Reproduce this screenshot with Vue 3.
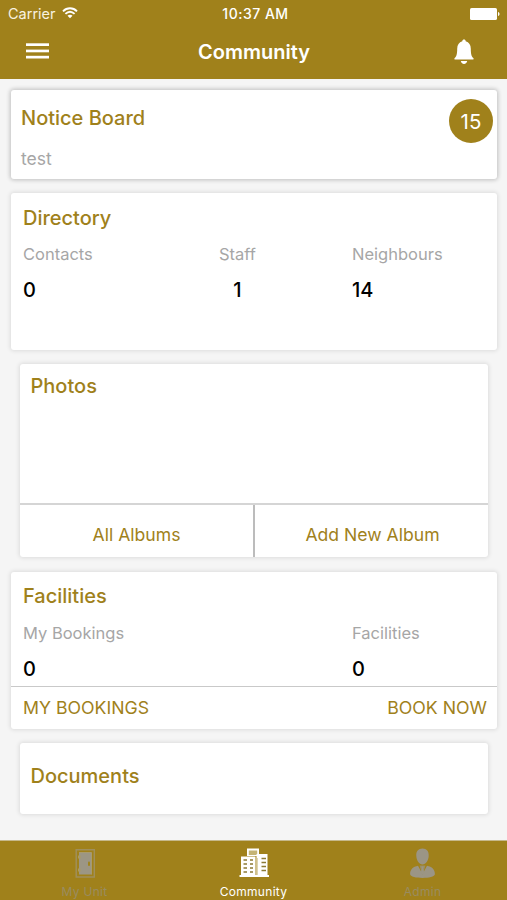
<script setup>
const directory = [
  { label: 'Contacts', value: '0' },
  { label: 'Staff', value: '1', centered: true },
  { label: 'Neighbours', value: '14' },
]
const facilities = [
  { label: 'My Bookings', value: '0' },
  { label: 'Facilities', value: '0', last: true },
]
</script>

<template>
  <div class="screen">
    <header class="header">
      <div class="status">
        <div class="carrier">
          <span>Carrier</span>
          <svg class="wifi" width="16" height="12" viewBox="0 0 16 12" fill="none" stroke="#fff" stroke-width="1.9">
            <path d="M1 4.3C5 .3 11 .3 15 4.3" />
            <path d="M3.4 6.9C6.2 4.2 9.8 4.2 12.6 6.9" />
            <path d="M5.5 8.7C7 7.4 9 7.4 10.5 8.7L8 11.3Z" fill="#fff" stroke="none" />
          </svg>
        </div>
        <span class="clock">10:37 AM</span>
        <svg class="battery" width="30" height="12" viewBox="0 0 30 12" fill="#fff">
          <rect width="27" height="12" rx="1.6" />
          <path d="M28 4C30 4.3 30 7.7 28 8Z" />
        </svg>
      </div>
      <div class="navbar">
        <svg class="menu" width="23" height="16" viewBox="0 0 23 16" fill="#fff">
          <rect y="0.3" width="23" height="2.7" />
          <rect y="6.6" width="23" height="2.7" />
          <rect y="12.8" width="23" height="2.7" />
        </svg>
        <h1>Community</h1>
        <svg class="bell" width="20" height="26" viewBox="0 0 20 26" fill="#fff">
          <path d="M8.300 2.300C8.300 1 9 .4 10 .4s1.700.6 1.700 1.900C15 3.200 16.800 6 16.800 9.700c0 5.500 .8 8 2.500 9.300.6.500.4 1.600-.5 1.600H1.200c-.9 0-1.100-1.100-.5-1.600C2.400 17.700 3.200 15.200 3.200 9.700 3.200 6 5 3.200 8.300 2.300Z" />
          <path d="M6.800 22h6.400c-.4 1.800-1.400 2.900-3.200 2.900S7.200 23.800 6.800 22Z" />
        </svg>
      </div>
    </header>

    <main class="content">
      <section class="card notice">
        <div>
          <h2>Notice Board</h2>
          <p class="label">test</p>
        </div>
        <span class="count">15</span>
      </section>

      <section class="card directory">
        <h2>Directory</h2>
        <div class="stats">
          <div v-for="item in directory" :key="item.label" class="stat" :class="{ centered: item.centered }">
            <span class="label">{{ item.label }}</span>
            <strong>{{ item.value }}</strong>
          </div>
        </div>
      </section>

      <section class="card inset photos">
        <h2>Photos</h2>
        <div class="actions">
          <button>All Albums</button>
          <button>Add New Album</button>
        </div>
      </section>

      <section class="card facilities">
        <h2>Facilities</h2>
        <div class="stats">
          <div v-for="item in facilities" :key="item.label" class="stat" :class="{ last: item.last }">
            <span class="label">{{ item.label }}</span>
            <strong>{{ item.value }}</strong>
          </div>
        </div>
        <div class="links">
          <button>MY BOOKINGS</button>
          <button>BOOK NOW</button>
        </div>
      </section>

      <section class="card inset documents">
        <h2>Documents</h2>
      </section>
    </main>

    <nav class="tabs">
      <div class="tab">
        <svg width="32" height="32" viewBox="0 0 32 32">
          <path d="M7.200 2.700H25.300V30H7.200Z" fill="none" stroke="#9f8f5c" stroke-width="1.400" />
          <path d="M10 5.500H22.500V27.500H10Z" fill="#9c9684" />
          <path d="M10 5.500H22.500V27.500" fill="none" stroke="#a99b6c" stroke-width="1" />
          <path d="M9 8.500h2.500v3H9ZM9 21.500h2.500v3H9Z" fill="#aa9a60" />
          <rect x="19" y="14.500" width="2" height="4.500" rx="1" fill="#a0831b" />
        </svg>
        <span>My Unit</span>
      </div>
      <div class="tab active">
        <svg width="32" height="32" viewBox="0 0 32 32">
          <path d="M9 1.500H21V9H9Z" fill="#fff" />
          <path d="M10.800 3.500H19.200V8H10.800Z" fill="#c5b475" />
          <path d="M3 9.500H17.500V28H3ZM18.500 7H29.500V28H18.500Z" fill="#fff" />
          <path d="M1.500 28H31V30H1.500Z" fill="#fff" />
          <path d="M5.500 13H9M12 13h3M5.500 17H9M12 17h3M5.500 21H9M12 21h3M5.500 25H9M12 25h3M23.500 11.500H28M23.500 15.500H28M23.500 19.500H28M23.500 23.500H28" stroke="#8c7a35" stroke-width="1.700" />
          <path d="M19.500 11v17" stroke="#ded5af" stroke-width="1" />
        </svg>
        <span>Community</span>
      </div>
      <div class="tab">
        <svg width="32" height="32" viewBox="0 0 32 32" fill="#9b9585">
          <path d="M15.500 1.500C19.700 1.500 22 4.300 21.700 9c-.3 4.800-2.900 8.500-6.200 8.500S9.600 13.800 9.300 9C9 4.300 11.300 1.500 15.500 1.500Z" />
          <path d="M11 18.800L15.500 27l4.500-8.200c5 1 7.900 3.700 7.900 8.300C27.900 29.800 21.500 31 15.500 31S3.100 29.800 3.100 27.100C3.100 22.500 6 19.800 11 18.800Z" />
          <path d="M12.500 18.500h6L15.500 28Z" fill="#9a8e65" />
          <path d="M14.300 19.500h2.400l-.5 2 1 4-1.700 2.300-1.700-2.300 1-4Z" />
        </svg>
        <span>Admin</span>
      </div>
    </nav>
  </div>
</template>

<style>
body {
  margin: 0;
}
</style>

<style scoped>
.screen {
  display: flex;
  flex-direction: column;
  width: 507px;
  height: 900px;
  overflow: hidden;
  background: #f5f5f5;
  color: #9f811b;
  font-family: Inter, "Liberation Sans", sans-serif;
}

h1,
h2,
p {
  margin: 0;
}

button {
  padding: 0;
  border: 0;
  background: none;
  color: inherit;
  font: inherit;
}

svg {
  display: block;
  flex: none;
}

.header {
  height: 79px;
  flex: none;
  background: #a0811b;
  color: #fff;
}

.status {
  display: grid;
  grid-template-columns: 1fr auto 1fr;
  align-items: center;
  height: 27px;
  padding: 0 7px 0 8px;
  font-size: 14.5px;
}

.carrier {
  display: flex;
  align-items: center;
  gap: 6px;
  color: #f8f2e0;
}

.wifi {
  margin-bottom: 1px;
}

.clock {
  font-weight: 500;
  font-size: 14px;
  letter-spacing: 0.5px;
  margin-left: 3px;
}

.battery {
  justify-self: end;
}

.navbar {
  display: grid;
  grid-template-columns: 1fr auto 1fr;
  align-items: center;
  height: 50px;
  padding: 0 33px 0 26px;
}

.navbar h1 {
  font-size: 20px;
  line-height: 24px;
  font-weight: 600;
  margin-left: 8px;
}

.menu {
  margin-bottom: 3px;
}

.bell {
  justify-self: end;
}

.content {
  display: flex;
  flex: 1;
  flex-direction: column;
  padding: 11px 10px 0 11px;
}

.card {
  box-sizing: border-box;
  flex: none;
  border-radius: 3px;
  background: #fff;
  box-shadow: 0 0 4px 1px rgba(0, 0, 0, 0.1);
}

.inset {
  margin-left: 9px;
  margin-right: 9px;
}

h2 {
  font-size: 20px;
  line-height: 24px;
  font-weight: 500;
}

.label {
  color: #a6a6a6;
  font-size: 16.5px;
  line-height: 20px;
}

.notice {
  display: flex;
  justify-content: space-between;
  height: 89px;
  padding: 9px 4px 0 10px;
  box-shadow: 0 0 4px 1px rgba(0, 0, 0, 0.22);
}

.notice h2 {
  margin-top: 7px;
}

.notice .label {
  margin-top: 19px;
  font-size: 17.5px;
}

.count {
  display: grid;
  place-items: center;
  width: 44px;
  height: 44px;
  border-radius: 50%;
  background: #a0811b;
  color: #fff;
  font-size: 20.5px;
}

.directory {
  height: 157px;
  margin-top: 14px;
  padding: 13px 12px 0;
}

.stats {
  display: grid;
  grid-template-columns: 196px 133px 1fr;
  margin-top: 14px;
}

.stat {
  display: flex;
  flex-direction: column;
  justify-self: start;
  gap: 14px;
}

.stat.centered {
  align-items: center;
}

.stat.last {
  grid-column: 3;
}

.stat strong {
  color: #000;
  font-size: 20px;
  line-height: 24px;
  font-weight: 500;
}

.photos {
  display: flex;
  flex-direction: column;
  justify-content: space-between;
  height: 193px;
  margin-top: 14px;
  padding-top: 10px;
}

.photos h2 {
  padding-left: 10.5px;
}

.actions {
  display: grid;
  grid-template-columns: 233px 1fr;
  height: 52px;
  border-top: 2px solid #d5d5d5;
  font-size: 17.6px;
}

.actions button {
  padding-top: 6px;
}

.actions button + button {
  border-left: 2px solid #bcbcbc;
  padding-left: 2px;
}

.facilities {
  height: 157px;
  margin-top: 15px;
  padding-top: 12px;
}

.facilities h2,
.facilities .stats {
  padding: 0 12px;
}

.facilities .stats {
  margin-top: 15px;
}

.links {
  display: flex;
  justify-content: space-between;
  height: 41px;
  margin-top: 5px;
  padding: 0 10px 0 12px;
  border-top: 1px solid #c9c9c9;
  font-size: 17.7px;
}

.documents {
  height: 71px;
  margin-top: 14px;
  padding: 21px 10.5px 0;
}

.tabs {
  display: grid;
  grid-template-columns: repeat(3, 1fr);
  flex: none;
  box-sizing: border-box;
  height: 60px;
  padding-top: 6px;
  border-top: 1px solid #c6b98c;
  background: #a0811b;
}

.tab {
  display: flex;
  flex-direction: column;
  align-items: center;
  gap: 5px;
  color: #998c60;
  font-size: 12px;
  line-height: 16px;
  letter-spacing: 0.3px;
}

.tab.active {
  color: #fff;
}
</style>
